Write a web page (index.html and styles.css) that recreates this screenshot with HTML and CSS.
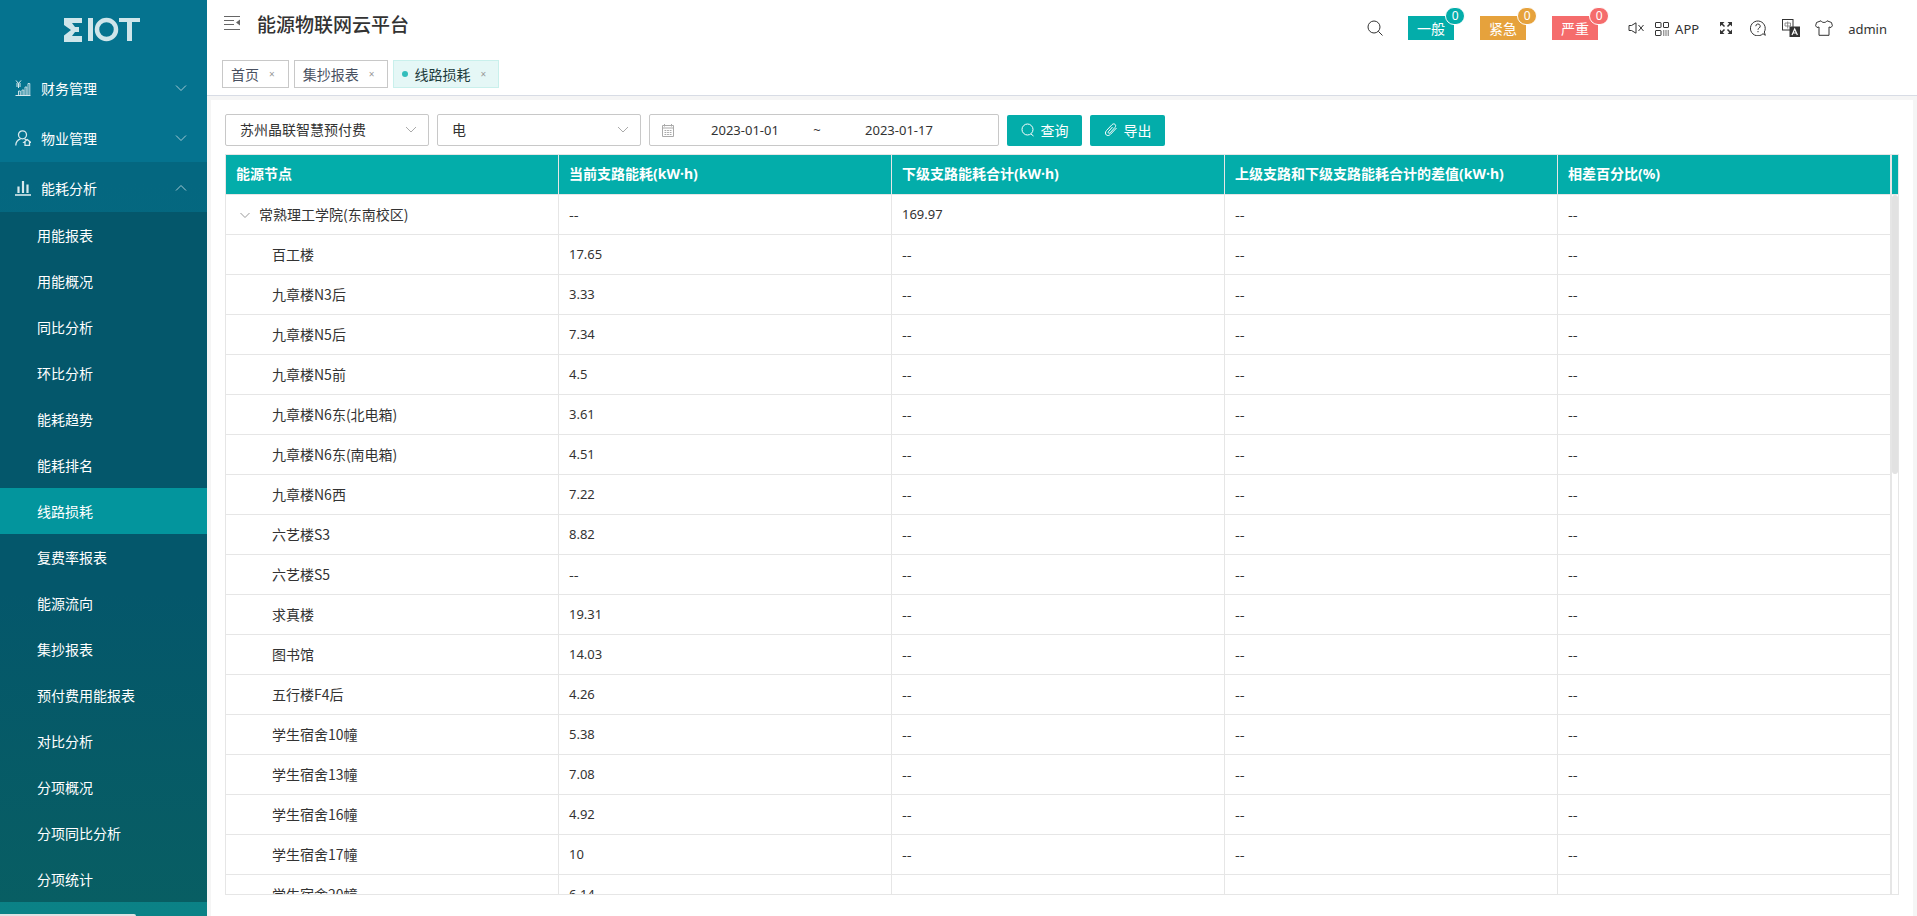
FILE: index.html
```
<!DOCTYPE html>
<html lang="zh-CN">
<head>
<meta charset="utf-8">
<title>能源物联网云平台</title>
<link rel="stylesheet" href="styles.css">
</head>
<body>
<div class="app">
  <nav class="sidebar">
    <div class="logo">
      <svg width="78" height="26" viewBox="0 0 78 26"><path d="M1 1h18v5H9l3 4h4v5h-4l-3 4h10v6H1v-6.500l7-5.500L1 8z"/><path d="M25 1h5v23h-5zM56 1h21v4h-8v19h-5V5h-8z"/><circle cx="43.500" cy="12.500" r="9.500" fill="none" stroke="#cfe5ea" stroke-width="4.500"/></svg>
    </div>
    <button class="menu" type="button">
      <svg class="micon" viewBox="0 0 16 16"><path d="M1 .5l2.500 3L6 .5M3.500 3.500V8M1 4h5M1 6h5M.5 15.500h15"/><path d="M3.500 15v-4h1.800v4M7 15v-5h1.800v5M10 15V7h1.800v8M13 15V3.500h1.800V15" stroke-width=".9"/></svg>
      <span>财务管理</span>
      <svg class="chev" viewBox="0 0 12 12"><path d="M1 3.500l5 5 5-5"/></svg>
    </button>
    <button class="menu" type="button">
      <svg class="micon" viewBox="0 0 16 16"><g stroke-width="1.300"><circle cx="7.500" cy="4.800" r="4"/><path d="M.8 15.500c0-3.500 1.700-5.700 4.700-6.700M9.500 8.700l2 1.300M12.200 9.500l3.300 2.800h-1v3h-4.500v-3H9z"/></g></svg>
      <span>物业管理</span>
      <svg class="chev" viewBox="0 0 12 12"><path d="M1 3.500l5 5 5-5"/></svg>
    </button>
    <button class="menu open" type="button">
      <svg class="micon" viewBox="0 0 16 16"><path d="M0 15h16" stroke-width="1.600"/><path d="M3.500 13V6.500M8 13V1M12.500 13V4.500" stroke-width="2.200"/></svg>
      <span>能耗分析</span>
      <svg class="chev" viewBox="0 0 12 12"><path d="M1 8.500l5-5 5 5"/></svg>
    </button>
    <div class="submenu">
      <a href="#">用能报表</a><a href="#">用能概况</a><a href="#">同比分析</a><a href="#">环比分析</a><a href="#">能耗趋势</a><a href="#">能耗排名</a><a href="#" class="active">线路损耗</a><a href="#">复费率报表</a><a href="#">能源流向</a><a href="#">集抄报表</a><a href="#">预付费用能报表</a><a href="#">对比分析</a><a href="#">分项概况</a><a href="#">分项同比分析</a><a href="#">分项统计</a>
    </div>
    <div class="status-tip"></div>
  </nav>
  <div class="main">
    <header class="header">
      <div class="topbar">
        <svg class="fold" viewBox="0 0 16 16"><path d="M0 1.500h16M0 5.500h10M0 9.500h10M0 14.500h16"/><path d="M16 4.500v6l-4-3z" fill="#666" stroke="none"/></svg>
        <h1>能源物联网云平台</h1>
        <div class="tools">
          <svg class="search" viewBox="0 0 16 16"><circle cx="7" cy="7" r="6"/><path d="M11.300 11.300L15.500 15.500"/></svg>
          <div class="alarms">
            <button type="button" class="alarm normal">一般<sup>0</sup></button>
            <button type="button" class="alarm urgent">紧急<sup>0</sup></button>
            <button type="button" class="alarm severe">严重<sup>0</sup></button>
          </div>
          <svg class="mute" viewBox="0 0 16 12"><path d="M1 3.500h2.500L8 .8v10.400L3.500 8.500H1zM10.500 3l5 6M15.500 3l-5 6"/></svg>
          <span class="appcode"><svg class="qr" viewBox="0 0 14 14"><rect x=".5" y=".5" width="5.500" height="5" rx=".5"/><rect x="8.500" y=".5" width="5" height="5" rx=".5"/><rect x=".5" y="8.500" width="5.500" height="5" rx=".5"/><path d="M8 9h6M8 11h6M8 13h6" stroke-dasharray="1.400 .9"/></svg>APP</span>
          <svg class="full" viewBox="0 0 12 12"><path d="M1 1l3.500 3.500M11 1L7.500 4.500M1 11l3.500-3.500M11 11L7.500 7.500" stroke-width="1.500"/><path d="M0 0h4.500L0 4.500zM12 0v4.500L7.500 0zM0 12V7.500L4.500 12zM12 12H7.500L12 7.500z" fill="#333" stroke="none"/></svg>
          <svg class="help" viewBox="0 0 16 16"><path d="M13 13.700A7.400 7.400 0 1 1 14.300 12l1 3.300z"/><path d="M5.800 6.200a2.200 2.200 0 1 1 3.300 1.900c-.8.500-1.100.9-1.100 1.600M8 11v1.200"/></svg>
          <svg class="lang" viewBox="0 0 18 18"><rect x=".5" y=".5" width="10.500" height="10.500"/><path d="M3 4h5.500v3H3zM5.700 2.500v7" stroke="#777" stroke-width=".8"/><path d="M7.500 7.500H18V18H7.500z" fill="#333" stroke="none"/><path d="M10 16l2.700-6 2.700 6M11 14h3.500" stroke="#fff" stroke-width="1.200"/></svg>
          <svg class="shirt" viewBox="0 0 18 16"><path d="M6 .8L1.500 2.500.6 5.800l1.400 1.700L4 7v8.300h10V7l2 .5 1.400-1.700-.9-3.300L12 .8C11 3 7 3 6 .8z"/></svg>
          <span class="user">admin</span>
        </div>
      </div>
      <div class="tabs">
        <a class="tab" href="#">首页<i>×</i></a><a class="tab" href="#">集抄报表<i>×</i></a><a class="tab current" href="#"><b></b>线路损耗<i>×</i></a>
      </div>
    </header>
    <main class="card">
      <form class="filters">
        <label class="pick"><select aria-label="项目"><option>苏州晶联智慧预付费</option></select><svg viewBox="0 0 12 12"><path d="M1 3l5 5 5-5"/></svg></label>
        <label class="pick"><select aria-label="能源类型"><option>电</option></select><svg viewBox="0 0 12 12"><path d="M1 3l5 5 5-5"/></svg></label>
        <div class="range">
          <svg viewBox="0 0 14 14"><path d="M1.500 2.500h11v11h-11zM1.500 5h11M3.500 1v2.500M10.500 1v2.500"/><path d="M3.500 7.500h7M3.500 9.500h7M3.500 11.500h7" stroke-dasharray="1.800 .8"/></svg>
          <input aria-label="开始日期" value="2023-01-01"><span>~</span><input aria-label="结束日期" value="2023-01-17">
        </div>
        <button class="btn" type="button"><svg viewBox="0 0 14 14"><circle cx="6.500" cy="6.500" r="5.500"/><path d="M10 11l2.500 2"/></svg>查询</button>
        <button class="btn" type="button"><svg viewBox="0 0 14 14"><path d="M8.500 4L4.500 8.500c-1 1.200.5 2.500 1.500 1.400l5-5.500c2-2.500-1-4.800-3-2.700L2.500 7.500c-3 3.500 1 7 4 3.800L12.500 5"/></svg>导出</button>
      </form>
      <div class="grid">
        <div class="scroller">
        <table>
          <thead><tr><th>能源节点</th><th>当前支路能耗(kW·h)</th><th>下级支路能耗合计(kW·h)</th><th>上级支路和下级支路能耗合计的差值(kW·h)</th><th>相差百分比(%)</th></tr></thead>
          <tbody>
            <tr><td class="root"><svg viewBox="0 0 12 12"><path d="M1.500 4L6 8.500 10.500 4"/></svg>常熟理工学院(东南校区)</td><td class="nil">--</td><td>169.97</td><td class="nil">--</td><td class="nil">--</td></tr>
            <tr><td>百工楼</td><td>17.65</td><td class="nil">--</td><td class="nil">--</td><td class="nil">--</td></tr>
            <tr><td>九章楼N3后</td><td>3.33</td><td class="nil">--</td><td class="nil">--</td><td class="nil">--</td></tr>
            <tr><td>九章楼N5后</td><td>7.34</td><td class="nil">--</td><td class="nil">--</td><td class="nil">--</td></tr>
            <tr><td>九章楼N5前</td><td>4.5</td><td class="nil">--</td><td class="nil">--</td><td class="nil">--</td></tr>
            <tr><td>九章楼N6东(北电箱)</td><td>3.61</td><td class="nil">--</td><td class="nil">--</td><td class="nil">--</td></tr>
            <tr><td>九章楼N6东(南电箱)</td><td>4.51</td><td class="nil">--</td><td class="nil">--</td><td class="nil">--</td></tr>
            <tr><td>九章楼N6西</td><td>7.22</td><td class="nil">--</td><td class="nil">--</td><td class="nil">--</td></tr>
            <tr><td>六艺楼S3</td><td>8.82</td><td class="nil">--</td><td class="nil">--</td><td class="nil">--</td></tr>
            <tr><td>六艺楼S5</td><td class="nil">--</td><td class="nil">--</td><td class="nil">--</td><td class="nil">--</td></tr>
            <tr><td>求真楼</td><td>19.31</td><td class="nil">--</td><td class="nil">--</td><td class="nil">--</td></tr>
            <tr><td>图书馆</td><td>14.03</td><td class="nil">--</td><td class="nil">--</td><td class="nil">--</td></tr>
            <tr><td>五行楼F4后</td><td>4.26</td><td class="nil">--</td><td class="nil">--</td><td class="nil">--</td></tr>
            <tr><td>学生宿舍10幢</td><td>5.38</td><td class="nil">--</td><td class="nil">--</td><td class="nil">--</td></tr>
            <tr><td>学生宿舍13幢</td><td>7.08</td><td class="nil">--</td><td class="nil">--</td><td class="nil">--</td></tr>
            <tr><td>学生宿舍16幢</td><td>4.92</td><td class="nil">--</td><td class="nil">--</td><td class="nil">--</td></tr>
            <tr><td>学生宿舍17幢</td><td>10</td><td class="nil">--</td><td class="nil">--</td><td class="nil">--</td></tr>
            <tr><td>学生宿舍20幢</td><td>6.14</td><td class="nil">--</td><td class="nil">--</td><td class="nil">--</td></tr>
          </tbody>
        </table>
        </div>
        <div class="rail"><div class="rail-head"></div><div class="thumb"></div></div>
      </div>
    </main>
  </div>
</div>
</body>
</html>
```
FILE: styles.css
```
* { box-sizing: border-box; }
body { margin: 0; font: 14px/20px "Noto Sans CJK SC", sans-serif; color: #333; background: #f5f5f5; }
svg { fill: none; stroke: #333; flex: none; }
a { text-decoration: none; color: inherit; }
button, input, select { font: inherit; }
.app { display: flex; height: 100vh; overflow: hidden; }

.sidebar { flex: none; width: 207px; position: relative; display: flex; flex-direction: column; overflow: hidden; color: #fff; background: linear-gradient(#05738f 0%, #05738f 20%, #0b8286 100%); }
.logo { flex: none; height: 62px; padding: 17px 0 0 63px; }
.logo svg { fill: #cfe5ea; stroke: none; display: block; }
.menu { flex: none; height: 50px; display: flex; align-items: center; gap: 11px; padding: 2px 20px 0 15px; border: 0; background: none; color: #fff; text-align: left; }
.menu span { flex: 1; }
.menu.open { background: rgba(0, 0, 0, .1); }
.micon { width: 16px; height: 16px; stroke: #d8e9ed; }
.menu .micon { margin-right: -1px; }
.chev { width: 12px; height: 12px; stroke: #a5cad4; }
.submenu { flex: none; background: linear-gradient(#04576b 0%, #04576b 55%, #085e63 100%); }
.submenu a { display: block; height: 46px; line-height: 46px; padding-left: 37px; }
.submenu .active { background: #03959d; }
.status-tip { position: absolute; left: 0; bottom: 0; width: 136px; height: 2px; background: #dee3e3; border-radius: 0 3px 0 0; }

.main { flex: 1; min-width: 0; display: flex; flex-direction: column; }
.header { flex: none; height: 96px; background: #fff; border-bottom: 1px solid #d8dce5; }
.topbar { height: 60px; display: flex; padding-left: 17px; }
.fold { width: 16px; height: 16px; margin-top: 15px; stroke: #666; }
h1 { margin: 10px auto 0 17px; font-size: 19px; line-height: 28px; font-weight: 500; }
.tools { display: flex; align-items: center; height: 56px; padding-right: 30px; }
.search { width: 16px; height: 16px; }
.alarms { display: flex; gap: 26px; margin: 0 30px 0 25px; }
.alarm { position: relative; width: 46px; height: 24px; padding: 0; border: 0; color: #fff; line-height: 24px; }
.alarm sup { position: absolute; top: -9px; right: -11px; width: 20px; height: 18px; border: 1px solid #fff; border-radius: 9px; font: 12px/15px "Noto Sans", sans-serif; text-align: center; }
.normal, .normal sup { background: #03adaa; }
.urgent, .urgent sup { background: #e6a23c; }
.severe, .severe sup { background: #f56c6c; }
.mute { width: 16px; height: 12px; }
.appcode { display: flex; align-items: center; gap: 6px; margin: 0 21px 0 11px; }
.appcode, .user { font-family: "Noto Sans", sans-serif; font-size: 13px; padding-top: 1px; }
.qr { width: 14px; height: 14px; }
.full { width: 12px; height: 12px; }
.help { width: 16px; height: 16px; margin: 0 16px 0 18px; }
.lang { width: 18px; height: 18px; }
.shirt { width: 18px; height: 16px; margin: 0 15px; }

.tabs { display: flex; gap: 5px; padding-left: 15px; }
.tab { display: flex; align-items: center; height: 28px; padding: 0 13px 0 8px; border: 1px solid #c8c8c8; color: #495060; white-space: nowrap; }
.tab i { margin-left: 10px; font: 10px/16px "Noto Sans", sans-serif; color: #999; }
.tab b { width: 6px; height: 6px; margin-right: 6px; border-radius: 50%; background: #33bdbb; }
.tab.current { padding-right: 12px; background: #e5f7f6; border-color: #c9f0ec; color: #1d3c3c; }

.card { flex: 1; min-height: 0; margin: 4px 4px 0; padding: 14px 14px 21px; background: #fff; display: flex; flex-direction: column; gap: 8px; }
.filters { display: flex; gap: 8px; }
.pick, .range { display: flex; align-items: center; height: 32px; border: 1px solid #c8c8c8; border-radius: 2px; background: #fff; }
.pick { width: 204px; position: relative; }
.pick select { appearance: none; width: 100%; height: 30px; padding: 0 30px 2px 14px; border: 0; background: transparent; color: #333; }
.pick svg { position: absolute; right: 11px; width: 12px; height: 12px; stroke: #aaa; pointer-events: none; }
.range { width: 350px; padding: 0 8px 0 11px; }
.range svg { width: 14px; height: 14px; stroke: #aaa; }
.range input { width: 130px; min-width: 0; padding: 0 0 0 10px; border: 0; background: none; color: #333; text-align: center; font: 13px/20px "Noto Sans", sans-serif; }
.range span { width: 24px; text-align: center; font-family: "Noto Sans", sans-serif; font-size: 13px; }
.btn { display: flex; align-items: center; justify-content: center; gap: 6px; width: 75px; height: 31px; margin-top: 1px; padding: 0 0 2px; border: 0; border-radius: 2px; background: #03adaa; color: #fff; }
.btn svg { width: 14px; height: 14px; stroke: #fff; }

.grid { flex: 1; min-height: 0; display: flex; border: 1px solid #e6e6e6; }
.scroller { flex: 1; min-width: 0; overflow: hidden; }
table { width: 100%; table-layout: fixed; border-collapse: separate; border-spacing: 0; }
th, td { height: 40px; padding: 0 10px 2px; border-right: 1px solid #e6e6e6; border-bottom: 1px solid #e6e6e6; text-align: left; white-space: nowrap; overflow: hidden; }
th { background: #03adaa; color: #fff; font-family: "Noto Sans", "Noto Sans CJK SC", sans-serif; font-weight: 700; }
td { font-family: "Noto Sans", sans-serif; font-size: 13px; }
td:first-child, .nil { font-family: "Noto Sans CJK SC", sans-serif; font-size: 14px; }
td:first-child { padding-left: 46px; }
td.root:first-child { padding-left: 13px; }
.root svg { width: 12px; height: 12px; margin-right: 8px; stroke: #999; vertical-align: -1px; }
.rail { flex: none; width: 7px; border-left: 1px solid #e6e6e6; }
.rail-head { height: 40px; background: #03adaa; border-bottom: 1px solid #e6e6e6; }
.thumb { height: 279px; border-radius: 3px; background: #e2e2e2; }
```
